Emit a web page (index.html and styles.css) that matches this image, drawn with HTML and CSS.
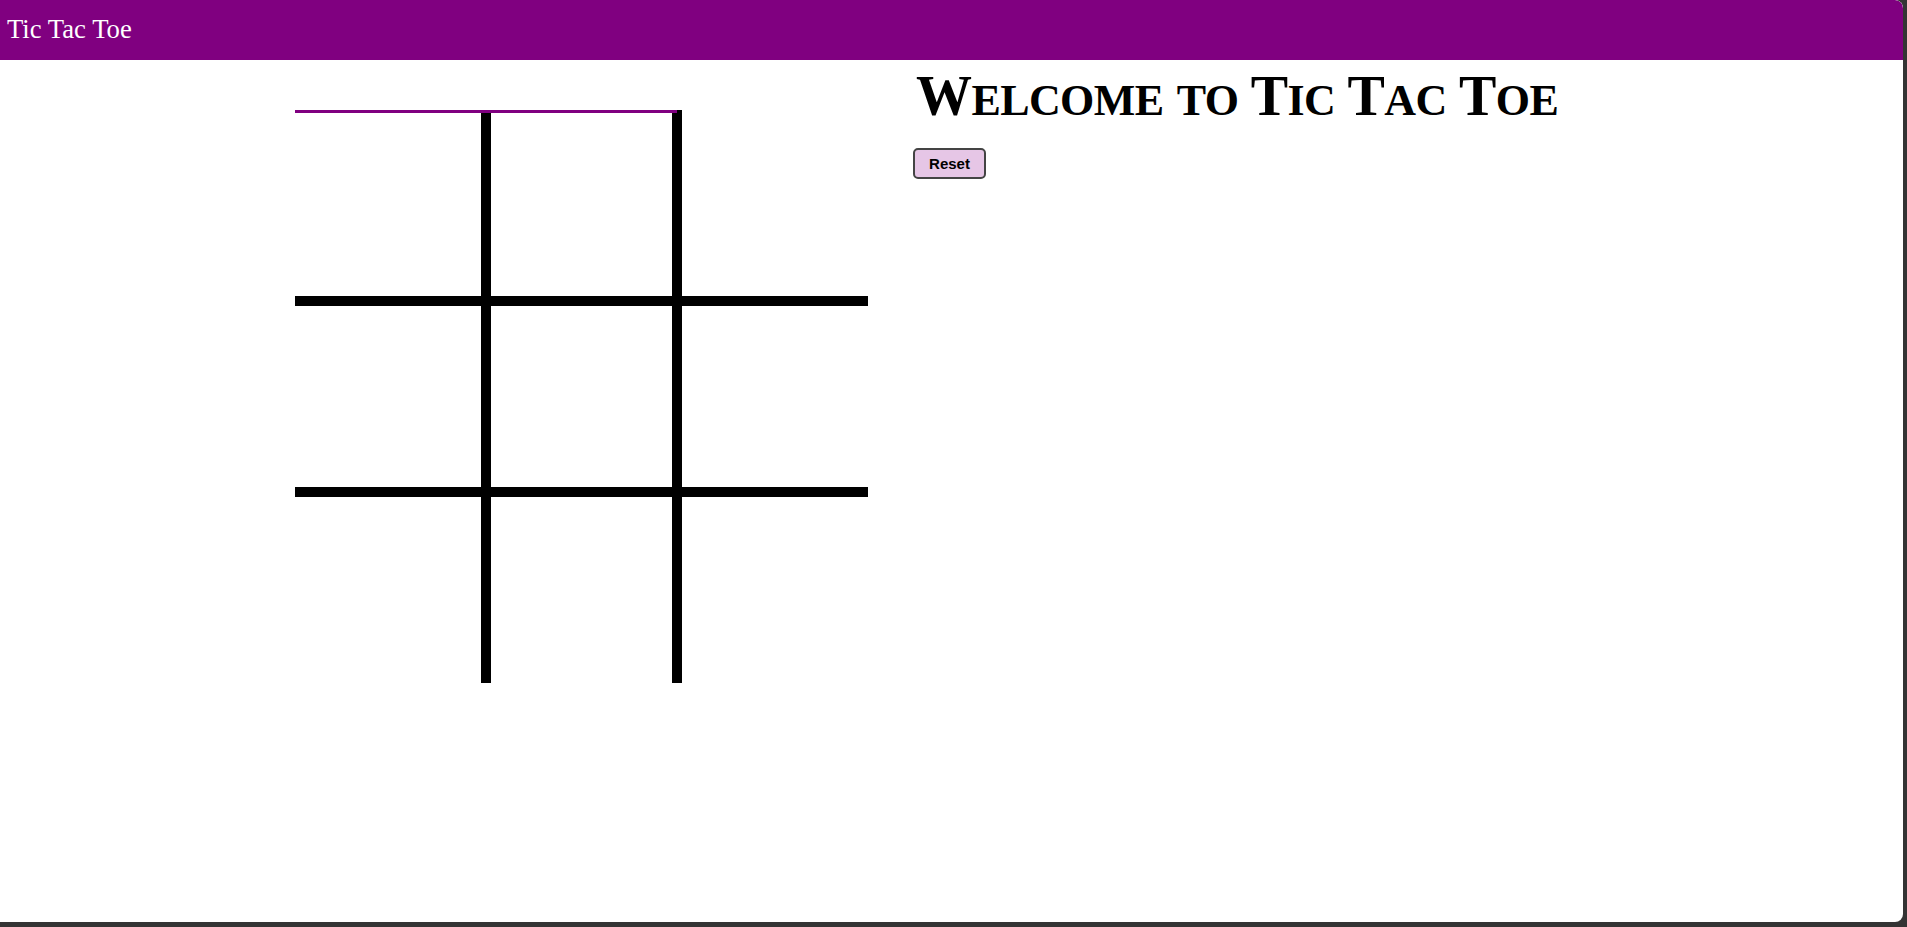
FILE: index.html
```html
<!DOCTYPE html>
<html>
<head>
<meta charset="utf-8">
<title>Tic Tac Toe</title>
<link rel="stylesheet" href="styles.css">
</head>
<body>
<div class="window">
  <header class="topbar">Tic Tac Toe</header>
  <main class="content">
    <section class="board-wrap">
      <div class="board">
        <div class="cell c1 r1"></div>
        <div class="cell c2 r1"></div>
        <div class="cell c3 r1"></div>
        <div class="cell c1 r2"></div>
        <div class="cell c2 r2"></div>
        <div class="cell c3 r2"></div>
        <div class="cell c1 r3"></div>
        <div class="cell c2 r3"></div>
        <div class="cell c3 r3"></div>
        <div class="win-line"></div>
      </div>
    </section>
    <section class="side">
      <h1 class="title">W<span class="sc">elcome</span> <span class="sc">to</span> T<span class="sc">ic</span> T<span class="sc">ac</span> T<span class="sc">oe</span></h1>
      <button class="reset">Reset</button>
    </section>
  </main>
</div>
</body>
</html>
```

FILE: styles.css
```css
html, body {
  margin: 0;
  padding: 0;
  height: 100%;
  background: #343434;
}
body {
  overflow: hidden;
}
.window {
  width: 1903px;
  height: 922px;
  background: #ffffff;
  border-radius: 0 8px 8px 0;
  overflow: hidden;
  display: flex;
  flex-direction: column;
}
.topbar {
  background: #800080;
  color: #ffffff;
  height: 60px;
  box-sizing: border-box;
  padding: 14px 0 0 7px;
  font-family: "Liberation Serif", "Times New Roman", serif;
  font-size: 26.7px;
  line-height: 30px;
  border-top-right-radius: 8px;
}
.content {
  display: flex;
  flex-direction: row;
  align-items: flex-start;
}
.board-wrap {
  padding: 50px 0 0 295px;
}
.board {
  position: relative;
  display: grid;
  grid-template-columns: 196px 191px 186px;
  grid-template-rows: 196px 191px 186px;
}
.cell {
  box-sizing: border-box;
  border: 0 solid #000;
}
.c1, .c2 { border-right-width: 10px; }
.r1, .r2 { border-bottom-width: 10px; }
.win-line {
  position: absolute;
  left: 0;
  top: 0;
  width: 382px;
  height: 3px;
  background: #800080;
}
.side {
  padding: 0 0 0 45px;
  display: flex;
  flex-direction: column;
  align-items: flex-start;
}
.title {
  margin: 8px 0 0 0;
  padding-left: 3px;
  height: 56px;
  font-family: "Liberation Serif", "Times New Roman", serif;
  font-weight: 700;
  font-size: 56px;
  line-height: 56px;
  letter-spacing: -0.6px;
  color: #000;
  white-space: nowrap;
}
.sc {
  font-size: 44px;
  line-height: 1;
  text-transform: uppercase;
}
.reset {
  margin-top: 24px;
  width: 73px;
  height: 31px;
  padding: 0;
  background: #e6c6e6;
  border: 2px solid #444444;
  border-radius: 5px;
  font-family: "Liberation Sans", Arial, sans-serif;
  font-weight: 700;
  font-size: 15px;
  color: #000;
}
```
